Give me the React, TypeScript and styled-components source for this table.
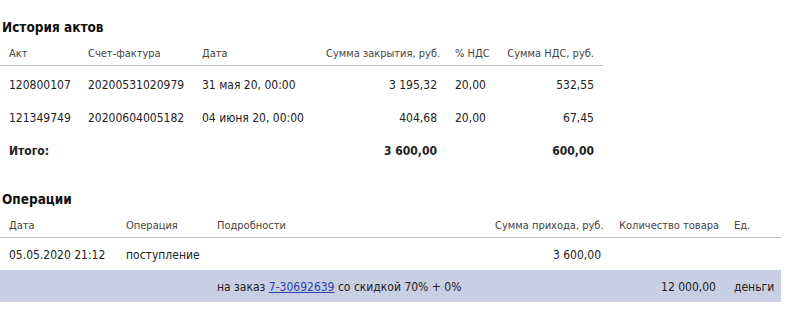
import React from 'react';
import styled, { createGlobalStyle } from 'styled-components';

const GlobalStyle = createGlobalStyle`
  body {
    margin: 0;
    background: #fff;
    color: #222;
    font-family: "DejaVu Sans Condensed", "DejaVu Sans", sans-serif;
  }
`;

const Page = styled.div`
  padding: 17px 0 0 0;
`;

const Title = styled.h2<{ $top?: number }>`
  margin: ${(p) => p.$top ?? 0}px 0 4px 2px;
  font-size: 13.5px;
  line-height: 20px;
  font-weight: bold;
  color: #111;
`;

// row height and how far the text sits below the middle differ per table
const Table = styled.table<{ $width: number; $rowHeight: number; $shift: number }>`
  width: ${(p) => p.$width}px;
  border-collapse: collapse;
  table-layout: fixed;
  font-size: 12px;

  td {
    height: ${(p) => p.$rowHeight - p.$shift}px;
    padding: ${(p) => p.$shift}px 9px 0 9px;
  }
`;

const Th = styled.th<{ $align?: 'left' | 'right' }>`
  height: 24px;
  padding: 0 9px;
  text-align: ${(p) => p.$align ?? 'left'};
  font-weight: normal;
  font-size: 11px;
  color: #444;
  border-bottom: 1px solid #bcc3cc;
  white-space: nowrap;
`;

const Td = styled.td<{ $align?: 'left' | 'right'; $bold?: boolean }>`
  text-align: ${(p) => p.$align ?? 'left'};
  font-weight: ${(p) => (p.$bold ? 'bold' : 'normal')};
  white-space: nowrap;
`;

const Row = styled.tr<{ $shaded?: boolean }>`
  background: ${(p) => (p.$shaded ? '#c9cfe3' : 'transparent')};
`;

const OrderLink = styled.a`
  color: #2b3fb0;
  text-decoration: underline;
`;

type Act = { act: string; invoice: string; date: string; sum: string; vat: string; vatSum: string };

const acts: Act[] = [
  { act: '120800107', invoice: '20200531020979', date: '31 мая 20, 00:00', sum: '3 195,32', vat: '20,00', vatSum: '532,55' },
  { act: '121349749', invoice: '20200604005182', date: '04 июня 20, 00:00', sum: '404,68', vat: '20,00', vatSum: '67,45' },
];

const actCols = [79, 114, 124, 129, 52, 105];
const opCols = [117, 91, 278, 124, 115, 56];

export default function App() {
  return (
    <Page>
      <GlobalStyle />
      <Title>История актов</Title>
      <Table $width={603} $rowHeight={33} $shift={5}>
        <colgroup>
          {actCols.map((w, i) => (
            <col key={i} style={{ width: w }} />
          ))}
        </colgroup>
        <thead>
          <tr>
            <Th>Акт</Th>
            <Th>Счет-фактура</Th>
            <Th>Дата</Th>
            <Th $align="right">Сумма закрытия, руб.</Th>
            <Th>% НДС</Th>
            <Th $align="right">Сумма НДС, руб.</Th>
          </tr>
        </thead>
        <tbody>
          {acts.map((a) => (
            <Row key={a.act}>
              <Td>{a.act}</Td>
              <Td>{a.invoice}</Td>
              <Td>{a.date}</Td>
              <Td $align="right">{a.sum}</Td>
              <Td>{a.vat}</Td>
              <Td $align="right">{a.vatSum}</Td>
            </Row>
          ))}
          <Row>
            <Td $bold>Итого:</Td>
            <Td />
            <Td />
            <Td $align="right" $bold>3 600,00</Td>
            <Td />
            <Td $align="right" $bold>600,00</Td>
          </Row>
        </tbody>
      </Table>

      <Title $top={24}>Операции</Title>
      <Table $width={781} $rowHeight={32} $shift={2}>
        <colgroup>
          {opCols.map((w, i) => (
            <col key={i} style={{ width: w }} />
          ))}
        </colgroup>
        <thead>
          <tr>
            <Th>Дата</Th>
            <Th>Операция</Th>
            <Th>Подробности</Th>
            <Th $align="right">Сумма прихода, руб.</Th>
            <Th $align="right">Количество товара</Th>
            <Th>Ед.</Th>
          </tr>
        </thead>
        <tbody>
          <Row>
            <Td>05.05.2020 21:12</Td>
            <Td>поступление</Td>
            <Td />
            <Td $align="right">3 600,00</Td>
            <Td />
            <Td />
          </Row>
          <Row $shaded>
            <Td />
            <Td />
            <Td>
              на заказ <OrderLink href="#">7-30692639</OrderLink> со скидкой 70% + 0%
            </Td>
            <Td />
            <Td $align="right">12 000,00</Td>
            <Td>деньги</Td>
          </Row>
        </tbody>
      </Table>
    </Page>
  );
}
